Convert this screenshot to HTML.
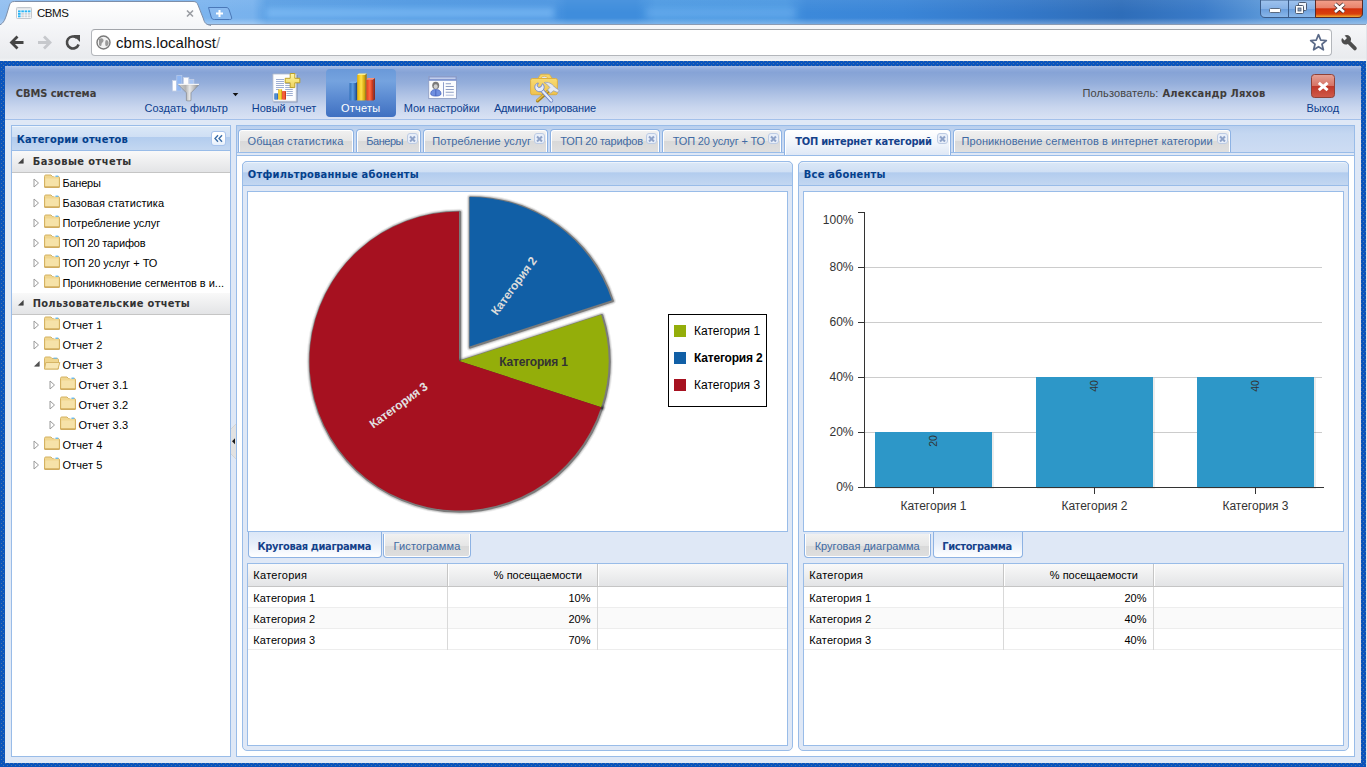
<!DOCTYPE html>
<html lang="ru">
<head>
<meta charset="utf-8">
<title>CBMS</title>
<style>
*{box-sizing:border-box;margin:0;padding:0}
html,body{width:1367px;height:767px;overflow:hidden;background:#dfe8f6}
body{position:relative;font-family:"Liberation Sans",sans-serif;font-size:11px;color:#000}
.abs{position:absolute}
.t{position:absolute;white-space:nowrap;line-height:14px}
.b{font-family:"DejaVu Sans Condensed","Liberation Sans",sans-serif;font-weight:bold}
/* ---------- browser chrome ---------- */
#title{left:0;top:0;width:1367px;height:25px;background:linear-gradient(90deg,#92bff0 0,#7cb4ee 14.500%,#78b2ed 18.500%,#5a9fe4 19.500%,#4f98e1 30%,#4a94e0 40.500%,#3f8ddc 41.500%,#3f8ddc 46.500%,#4c99e2 48%,#4a97e1 57.500%,#3c89da 59%,#3a85d7 66%,#3479ca 74%,#2e6db9 82%,#3a7bc8 88%,#5a97d8 92.500%,#6aa4e0 100%)}
#title:after{content:"";position:absolute;left:0;right:0;top:0;height:25px;background:linear-gradient(180deg,rgba(255,255,255,.06),rgba(255,255,255,0) 50%,rgba(255,255,255,0) 72%,rgba(255,255,255,.32))}
#bar{left:0;top:24px;width:1367px;height:37px;background:linear-gradient(180deg,#f6f7f9,#eff0f3 50%,#e9ebee 92%,#f4f5f6 100%)}
#omni{left:91px;top:29px;width:1241px;height:27px;background:#fff;border:1px solid #b3b6bb;border-top-color:#a2a5aa;border-radius:4px}
#url{left:116px;top:33px;font-size:15px;line-height:18px;color:#111;letter-spacing:.55px}
/* ---------- app ---------- */
#app{left:0;top:61px;width:1367px;height:706px;background-color:#0a54bc;background-image:radial-gradient(circle at 1.500px 2.500px,rgba(150,150,140,.5) .5px,rgba(150,150,140,0) .8px),radial-gradient(circle at 3.500px .5px,rgba(150,150,140,.5) .5px,rgba(150,150,140,0) .8px);background-size:4px 4px}
#inner{left:5px;top:66px;width:1356px;height:697px;background:#dfe8f6}
#hdr{left:5px;top:66px;width:1356px;height:54px;border-bottom:1px solid #a3c0ea;background:linear-gradient(180deg,#a8bee7 0,#90abdb 6%,#86a3d6 12%,#94aedb 32%,#b0c3e5 55%,#c9d6ee 78%,#d9e2f4 100%)}
.tbt{color:#0d3e8e}
#sel{left:326px;top:69px;width:70px;height:48px;border-radius:4px;background:linear-gradient(180deg,#6a99d9 0,#75a3df 25%,#5b8bd2 60%,#3f70c1 100%)}
/* panels */
.ph{position:absolute;border:1px solid #99bce8;background:linear-gradient(180deg,#dbe8f7 0,#cfdff4 45%,#b2ccee 46%,#c3d7f1 100%);box-shadow:inset 0 1px 0 #eef4fc}
.pt{color:#04408c;font-weight:bold}
.ghd{position:absolute;background:linear-gradient(180deg,#f9f9f9,#e3e4e6);border-bottom:1px solid #c5c5c5}
.tab{position:absolute;height:23px;border:1px solid #8db2e3;border-bottom:none;border-radius:4px 4px 0 0;background:linear-gradient(180deg,#f1f1f1 0,#e6e6e6 50%,#d9d9d9 51%,#dfdfdf 100%);box-shadow:inset 0 1px 0 #fff,inset 1px 0 0 #fff,inset -1px 0 0 #fff}
.tab.on{background:linear-gradient(180deg,#fff 0,#eef3fa 60%,#dfe8f6 100%)}
.tab .t{top:5px;color:#416aa3}
.tab.on .t{color:#15428b;font-weight:bold;font-family:"DejaVu Sans Condensed","Liberation Sans",sans-serif}
.cl{position:absolute;top:3px;right:2px;width:11px;height:11px;border:1px solid #bccbe4;border-radius:3px;background:#e9eff9}
.cl:before,.cl:after{content:"";position:absolute;left:1px;top:3.500px;width:7px;height:2px;background:#8fa3c8;transform:rotate(45deg)}
.cl:after{transform:rotate(-45deg)}
.row{position:absolute;left:0;width:218px;height:20px}
.fold{position:absolute;width:16px;height:13px}
.exp{position:absolute;width:0;height:0}
.cell{position:absolute;border-bottom:1px solid #ededed;height:21px}
</style>
</head>
<body>
<div id="title" class="abs"></div>
<div class="abs" style="left:266px;top:8px;width:288px;height:10px;background:rgba(150,205,255,.5);filter:blur(3px)"></div>
<div class="abs" style="left:646px;top:8px;width:150px;height:10px;background:rgba(150,205,255,.28);filter:blur(3px)"></div>
<div id="bar" class="abs"></div>
<svg class="abs" style="left:0;top:0" width="1367" height="62" viewBox="0 0 1367 62">
<defs>
<linearGradient id="tg" x1="0" y1="0" x2="0" y2="1"><stop offset="0" stop-color="#ffffff"/><stop offset="1" stop-color="#f5f6f8"/></linearGradient>
<linearGradient id="cg" x1="0" y1="0" x2="0" y2="1"><stop offset="0" stop-color="#f3a08c"/><stop offset=".45" stop-color="#e8836c"/><stop offset=".5" stop-color="#d2300e"/><stop offset=".8" stop-color="#d8400c"/><stop offset="1" stop-color="#f6c23a"/></linearGradient>
<linearGradient id="wg" x1="0" y1="0" x2="0" y2="1"><stop offset="0" stop-color="#9fc3ee"/><stop offset=".5" stop-color="#86b1e6"/><stop offset=".52" stop-color="#6b9edc"/><stop offset="1" stop-color="#8bb8ea"/></linearGradient>
</defs>
<!-- active tab -->
<path d="M0 24.500 H1367" stroke="#8b9bb3" stroke-width="1"/>
<path d="M-2 26 C3 24 4.500 21 6.500 15 L9.500 5 C10.500 2.500 11.500 1.500 14.500 1.500 L193 1.500 C196 1.500 197 2.500 198 5 L203.500 19 C204.500 23 206 24.500 211 26 Z" fill="url(#tg)"/>
<path d="M-2 25.500 C3 24 4.500 21 6.500 15 L9.500 5 C10.500 2.500 11.500 1.500 14.500 1.500 L193 1.500 C196 1.500 197 2.500 198 5 L203.500 19 C204.500 23 206 24.500 211 25.500" fill="none" stroke="#7d8ea8" stroke-width="1"/>
<!-- favicon -->
<rect x="16.500" y="7.500" width="15" height="11" rx=".8" fill="#fbfcfd" stroke="#c3c8ce"/>
<rect x="17" y="8" width="14" height="1.600" fill="#e2e5e8"/>
<rect x="18" y="10.4" width="2.600" height="1.900" fill="#2ab4f4"/><rect x="21.3" y="10.4" width="2.600" height="1.900" fill="#2ab4f4"/><rect x="24.6" y="10.4" width="2.600" height="1.900" fill="#2ab4f4"/><rect x="27.9" y="10.4" width="2.600" height="1.900" fill="#2ab4f4"/><rect x="18" y="12.9" width="2.600" height="1.900" fill="#2ab4f4"/><rect x="21.3" y="12.9" width="2.600" height="1.900" fill="#cdd3da"/><rect x="24.6" y="12.9" width="2.600" height="1.900" fill="#cdd3da"/><rect x="27.9" y="12.9" width="2.600" height="1.900" fill="#cdd3da"/><rect x="18" y="15.4" width="2.600" height="1.900" fill="#2ab4f4"/><rect x="21.3" y="15.4" width="2.600" height="1.900" fill="#cdd3da"/><rect x="24.6" y="15.4" width="2.600" height="1.900" fill="#cdd3da"/><rect x="27.9" y="15.4" width="2.600" height="1.900" fill="#cdd3da"/>
<!-- tab close -->
<path d="M187 10.5 L193 16.5 M193 10.5 L187 16.5" stroke="#9a9da3" stroke-width="1.6" fill="none"/>
<!-- new tab -->
<path d="M208.5 7.5 L226 7.5 C228 7.5 228.6 8.3 229.2 10 L231.5 17 C232 19 231.5 19.5 229.5 19.5 L214.5 19.5 C212.5 19.5 211.8 18.8 211.2 17 Z" fill="#8dbcf0" fill-opacity=".75" stroke="#4a78b8" stroke-width="1"/>
<path d="M219.5 10 V17 M216 13.5 H223" stroke="#fff" stroke-width="2"/>
<!-- window controls -->
<path d="M1260.5 0 V13 C1260.5 16 1262 17.5 1265 17.5 H1358 C1361 17.5 1362.5 16 1362.5 13 V0 Z" fill="url(#wg)" stroke="#3b5c8a" stroke-width="1"/>
<path d="M1315.5 0 V17.5 H1358 C1361 17.5 1362.5 16 1362.5 13 V0 Z" fill="url(#cg)" stroke="#5a2a26" stroke-width="1"/>
<path d="M1288.5 0 V17" stroke="#3b5c8a" stroke-width="1"/>
<rect x="1269.5" y="8.5" width="11" height="4" rx="1" fill="#fff" stroke="#5a6a80"/>
<rect x="1298.5" y="2.5" width="8" height="8" rx="1" fill="#eef3fa" stroke="#4c5a70"/>
<rect x="1295.500" y="5.5" width="8" height="8" rx="1" fill="#fff" stroke="#4c5a70"/>
<rect x="1298" y="8" width="3" height="3" fill="#8aa0c0" stroke="#4c5a70" stroke-width=".8"/>
<path d="M1335 4 L1344 12 M1344 4 L1335 12" stroke="#4a3030" stroke-width="4.2"/>
<path d="M1335 4 L1344 12 M1344 4 L1335 12" stroke="#fff" stroke-width="2.6"/>
<!-- nav buttons -->
<path d="M23.500 42.500 H12 M17.500 36.500 L11.500 42.500 L17.500 48.500" fill="none" stroke="#454545" stroke-width="2.800"/>
<path d="M38 42.500 H49.500 M44 36.500 L50 42.500 L44 48.500" fill="none" stroke="#c6c8cc" stroke-width="2.800"/>
<path d="M77 38 A6 6 0 1 0 78.600 44.500" fill="none" stroke="#4a4a4a" stroke-width="2.600"/>
<path d="M73 35 H80 V42 Z" fill="#4a4a4a"/>
</svg>
<div id="omni" class="abs"></div>
<svg class="abs" style="left:95px;top:34px" width="18" height="18" viewBox="0 0 18 18"><circle cx="8.500" cy="8.500" r="6.500" fill="#f2f2f2" stroke="#7a7a7a" stroke-width="1.400"/><path d="M4 5 C6 3.500 8 4 8.500 6 C9 8 6.500 8.500 6.500 10.500 C6.500 12.500 5 12.500 4 11 Z M11 6 C13 6 14 8 13.500 10 C13 12 11 13 10.500 11.500 C10 10 10 7 11 6 Z" fill="#9a9a9a"/></svg>
<div class="t " style="left:116px;top:34px;font-size:15px;line-height:18px;color:#111;letter-spacing:.05px">cbms.localhost<span style="color:#8a8a8a">/</span></div>
<svg class="abs" style="left:1308px;top:31px" width="56" height="24" viewBox="0 0 56 24">
<g transform="translate(10.500 11.800) scale(.92) translate(-10.500 -11.300)"><path d="M10.500 2.500 L12.900 8.300 L19 8.800 L14.300 12.800 L15.800 18.900 L10.500 15.600 L5.200 18.900 L6.700 12.800 L2 8.800 L8.100 8.300 Z" fill="#fff" stroke="#5b6a88" stroke-width="1.900" stroke-linejoin="round"/></g>
<g transform="translate(40.800 11.300) rotate(-45) scale(.86)"><path d="M-2 -9 V-5 H2 V-9 A5 5 0 0 1 2.200 0.600 V10 A2.200 2.200 0 0 1 -2.200 10 V0.600 A5 5 0 0 1 -2 -9 Z" fill="#4d4d4d"/></g>
</svg>
<div class="t " style="left:37px;top:6px;font-size:11.5px;line-height:14.5px;letter-spacing:-0.456px;color:#111">CBMS</div>
<div id="app" class="abs"></div>
<div id="inner" class="abs"></div>
<div id="hdr" class="abs"></div>
<div class="abs" style="left:1366px;top:24px;width:1px;height:743px;background:#e2e5ea"></div>
<div class="t b" style="left:15.7px;top:87px;letter-spacing:-0.042px;color:#403c3a">CBMS система</div>
<div id="sel" class="abs"></div>
<div class="t tbt" style="left:144.5px;top:101px;letter-spacing:0.072px;">Создать фильтр</div>
<div class="t tbt" style="left:251.7px;top:101px;letter-spacing:0.023px;">Новый отчет</div>
<div class="t tbt" style="left:341px;top:101px;letter-spacing:0.213px;color:#fff">Отчеты</div>
<div class="t tbt" style="left:403.7px;top:101px;letter-spacing:-0.067px;">Мои настройки</div>
<div class="t tbt" style="left:493.9px;top:101px;letter-spacing:-0.170px;">Администрирование</div>
<div class="t " style="left:1082.5px;top:86px;letter-spacing:0.120px;color:#444">Пользователь:</div>
<div class="t b" style="left:1162.5px;top:87px;letter-spacing:0.183px;color:#403c3a">Александр Ляхов</div>
<div class="t tbt" style="left:1306.5px;top:101px;letter-spacing:-0.083px;">Выход</div>
<svg class="abs" style="left:140px;top:66px" width="480" height="54" viewBox="140 66 480 54">
<defs>
<linearGradient id="fn" x1="0" y1="0" x2="1" y2="0"><stop offset="0" stop-color="#d2d2d2"/><stop offset=".35" stop-color="#b4b4b4"/><stop offset=".55" stop-color="#e8e8e8"/><stop offset="1" stop-color="#8e8e8e"/></linearGradient>
<linearGradient id="bb" x1="0" y1="0" x2="1" y2="0"><stop offset="0" stop-color="#2f6fb8"/><stop offset=".5" stop-color="#5b9be0"/><stop offset="1" stop-color="#2a5fa5"/></linearGradient>
<linearGradient id="by" x1="0" y1="0" x2="1" y2="0"><stop offset="0" stop-color="#e8b100"/><stop offset=".5" stop-color="#ffe14a"/><stop offset="1" stop-color="#c99700"/></linearGradient>
<linearGradient id="br" x1="0" y1="0" x2="1" y2="0"><stop offset="0" stop-color="#e2401c"/><stop offset=".5" stop-color="#ff6a45"/><stop offset="1" stop-color="#b8260c"/></linearGradient>
<linearGradient id="gold2" x1="0" y1="0" x2="0" y2="1"><stop offset="0" stop-color="#f8da72"/><stop offset="1" stop-color="#efc24c"/></linearGradient>
<linearGradient id="gold" x1="0" y1="0" x2="0" y2="1"><stop offset="0" stop-color="#fff6a6"/><stop offset=".5" stop-color="#f6e57c"/><stop offset="1" stop-color="#ecd060"/></linearGradient>
</defs>
<!-- funnel -->
<rect x="172.500" y="80.500" width="4" height="10.500" fill="#fdfdff" stroke="#c3cfe6" stroke-width=".8"/>
<rect x="176.800" y="75.500" width="5" height="15.500" fill="#8fb6f2" stroke="#b4c8ea" stroke-width=".8"/>
<rect x="183.400" y="77.500" width="5.400" height="7" fill="#fdfdff" stroke="#c3cfe6" stroke-width=".8"/>
<rect x="189.200" y="79.500" width="4.600" height="5" fill="#a9c6f4" stroke="#c3cfe6" stroke-width=".8"/>
<path d="M178.300 84.600 H199 L191 92.800 V100.500 C190 101 187.500 101 186.400 100.500 V92.800 Z" fill="url(#fn)" stroke="#85898f" stroke-width=".7"/>
<path d="M178.300 84.400 H199" stroke="#f4f4f4" stroke-width="1.200"/>
<path d="M232.700 93 H238.300 L235.500 96.200 Z" fill="#111"/>
<!-- new report -->
<path d="M273.500 102 H297 V75" fill="none" stroke="#5f6f8f" stroke-opacity=".55" stroke-width="1.200"/>
<path d="M272.900 74 H296.300 V101.300 H272.900 Z" fill="#fcfdff" stroke="#aeb7c8" stroke-width=".8"/>
<g stroke="#9fafd2" stroke-width="1"><path d="M276 79.500 H284 M276 81.500 H284 M276 83.500 H284 M276 85.500 H284 M276 87.500 H284 M276 89.500 H279 M285.200 83.500 H290 M285.200 85.500 H290 M285.200 87.500 H292.800 M285.200 89.500 H292.800 M286.500 91.500 H292.800 M286.500 93.500 H292.800 M286.500 95.500 H292.800"/></g>
<rect x="274.300" y="93.200" width="3.700" height="6.500" rx=".6" fill="url(#bb)"/><rect x="278.200" y="89.200" width="3.900" height="10.500" rx=".6" fill="url(#by)"/><rect x="282.100" y="91" width="3.900" height="8.700" rx=".6" fill="url(#br)"/>
<path d="M290.200 73.500 H294.800 V78.300 H299.800 V82.800 H294.800 V87.600 H290.200 V82.800 H285.200 V78.300 H290.200 Z" fill="url(#gold)" stroke="#b89a1a" stroke-width=".9" stroke-linejoin="round"/>
<!-- reports (selected) -->
<rect x="349.500" y="83" width="6.500" height="17.500" fill="url(#bb)"/><path d="M349.500 83 L351 81.500 H357.500 L356 83 Z" fill="#7db2ec"/><path d="M356 83 L357.500 81.500 V99.500 L356 100.500 Z" fill="#244f8c"/>
<rect x="357.200" y="75" width="8" height="25.500" fill="url(#by)"/><path d="M357.200 75 L358.700 73.500 H366.700 L365.200 75 Z" fill="#fff08a"/><path d="M365.200 75 L366.700 73.500 V99.500 L365.200 100.500 Z" fill="#a87e00"/>
<rect x="366.400" y="79.500" width="7" height="21" fill="url(#br)"/><path d="M366.400 79.500 L367.900 78 H374.900 L373.400 79.500 Z" fill="#ff8f70"/><path d="M373.400 79.500 L374.900 78 V99.500 L373.400 100.500 Z" fill="#96200a"/>
<!-- my settings -->
<rect x="428.700" y="76.600" width="27.800" height="22" fill="#fbfcfe" stroke="#8e9dc2" stroke-width=".9"/>
<rect x="428.700" y="76.600" width="27.800" height="4.200" fill="#7e94ce"/>
<rect x="429.600" y="77.400" width="26" height="1.700" fill="#c2cdea"/>
<ellipse cx="435.700" cy="85.600" rx="3.500" ry="3.800" fill="#7b7b7b"/><ellipse cx="435.700" cy="86.600" rx="2" ry="2.400" fill="#cfcfcf"/>
<path d="M430.700 94 C430.700 90.500 433 89.500 435.800 89.500 C438.600 89.500 441 90.500 441 94 C441 96.800 430.700 96.800 430.700 94 Z" fill="#6f8fe0" stroke="#3f5cb8" stroke-width=".7"/>
<path d="M435.800 90 V96" stroke="#3f5cb8" stroke-width=".8"/>
<path d="M443.500 82.200 V96.500" stroke="#8f9fcc" stroke-width="1"/>
<g stroke="#8f9ec4" stroke-width="1.100"><path d="M445.700 83.700 H451 M445.700 86.500 H453.800 M445.700 89.500 H453.800 M445.700 92.300 H453.800"/><path d="M445.700 95.200 H453.800" stroke="#b5c0de"/></g>
<!-- admin -->
<path d="M537.500 79 L540 75.200 C540.400 74.500 541 74.200 542 74.200 H548 C549 74.200 549.600 74.500 550 75.200 L552.500 79 Z" fill="#f6d468" stroke="#dcae3c" stroke-width=".8"/>
<ellipse cx="544.400" cy="77.600" rx="2.800" ry="1.300" fill="#dfe6f2" stroke="#dcae3c" stroke-width=".7"/>
<rect x="530.600" y="78.500" width="26.800" height="16.200" rx="1.800" fill="url(#gold2)" stroke="#dcae3c" stroke-width=".9"/>
<path d="M547.600 91.800 L537.600 100.800" stroke="#a8821c" stroke-width="3.400" stroke-linecap="round"/><path d="M547.400 91.400 L537.200 100.400" stroke="#e2bc4a" stroke-width="1.600" stroke-linecap="round"/>
<path d="M544.200 82.600 C548 81.600 552 83.500 554.500 87 L558.800 90 C559.600 91 558.500 92.600 557 92.200 L553.500 90.800 L550.500 93.200 L547.500 90 L549.800 87.500 C548.500 85.500 546.500 84 544.200 82.600 Z" fill="#e4e9f4" stroke="#8a96b8" stroke-width=".7"/>
<path d="M540.500 88.800 L551.300 100.600" stroke="#6f86c8" stroke-width="3.800" stroke-linecap="round"/><path d="M540.500 88.800 L551.300 100.600" stroke="#e6ecfa" stroke-width="2.200" stroke-linecap="round"/>
<path d="M535.200 85.200 C534.200 88 535.500 90.800 538.500 91.600 C540.800 92.200 543 91 543.800 89 C544.600 87 544 85 542.600 83.600 L541 86.800 L538.600 87.600 L537.200 85.800 L538.300 83 C537 83.200 535.800 84 535.200 85.200 Z" fill="#e6ecfa" stroke="#6f86c8" stroke-width=".9"/>
</svg>
<svg class="abs" style="left:1308px;top:70px" width="32" height="32" viewBox="1308 70 32 32">
<defs><linearGradient id="ex" x1="0" y1="0" x2="0" y2="1"><stop offset="0" stop-color="#e5a296"/><stop offset=".48" stop-color="#d67466"/><stop offset=".52" stop-color="#c0382a"/><stop offset="1" stop-color="#d05a4a"/></linearGradient></defs>
<rect x="1311.500" y="74.500" width="23" height="23" rx="3" fill="url(#ex)" stroke="#8f4238"/>
<path d="M1318.800 82.800 L1327.600 90.200 M1327.600 82.800 L1318.800 90.200" stroke="#fff" stroke-width="3"/>
</svg>
<div class="abs" style="left:11px;top:125px;width:220px;height:632px;border:1px solid #99bce8;background:#fff"></div>
<div class="ph" style="left:11px;top:125px;width:220px;height:26px"></div>
<div class="t b pt" style="left:16.7px;top:133px;letter-spacing:0.169px;">Категории отчетов</div>
<div class="abs" style="left:211px;top:131px;width:15px;height:15px;border:1px solid #a9c4ec;border-radius:3px;background:linear-gradient(180deg,#fff 50%,#e4eefb)"></div>
<svg class="abs" style="left:211px;top:131px" width="15" height="15" viewBox="0 0 15 15"><path d="M7 4.200 L4 7.500 L7 10.800 M11 4.200 L8 7.500 L11 10.800" fill="none" stroke="#3b6ea8" stroke-width="1.400"/></svg>
<div class="ghd" style="left:12px;top:151px;width:218px;height:22px"></div>
<svg class="abs" style="left:17px;top:157px" width="8" height="8" viewBox="0 0 8 8"><path d="M6.300 1.500 V6.300 H1.500 Z" fill="#444" stroke="#333" stroke-width=".5"/></svg>
<div class="t b" style="left:32.7px;top:155px;letter-spacing:0.438px;color:#333">Базовые отчеты</div>
<svg class="abs" style="left:33px;top:178px" width="7" height="10" viewBox="0 0 7 10"><path d="M1 1 L5.500 5 L1 9 Z" fill="#fff" stroke="#9a9a9a" stroke-width="1"/></svg>
<svg class="abs" style="left:43px;top:174px" width="18" height="14" viewBox="0 0 18 14"><path d="M1.500 13 V2.500 C1.500 1.500 2 1 3 1 H8 L9.500 2.500 H15 C16 2.500 16.500 3 16.500 4 V13 Z" fill="#f0d690" stroke="#d4b262" stroke-width="1"/><path d="M2.500 4.500 H15.500 V12.300 H2.500 Z" fill="#f6e2a8"/><path d="M10.500 2 H15" stroke="#fff" stroke-width="1.400"/><path d="M12.500 2.200 H15.300" stroke="#4fb0ee" stroke-width="1.200"/><path d="M1.500 13.200 H16.500" stroke="#c9a04c" stroke-width="1.200"/></svg>
<div class="t " style="left:62.4px;top:176px;letter-spacing:-0.209px;">Банеры</div>
<svg class="abs" style="left:33px;top:198px" width="7" height="10" viewBox="0 0 7 10"><path d="M1 1 L5.500 5 L1 9 Z" fill="#fff" stroke="#9a9a9a" stroke-width="1"/></svg>
<svg class="abs" style="left:43px;top:194px" width="18" height="14" viewBox="0 0 18 14"><path d="M1.500 13 V2.500 C1.500 1.500 2 1 3 1 H8 L9.500 2.500 H15 C16 2.500 16.500 3 16.500 4 V13 Z" fill="#f0d690" stroke="#d4b262" stroke-width="1"/><path d="M2.500 4.500 H15.500 V12.300 H2.500 Z" fill="#f6e2a8"/><path d="M10.500 2 H15" stroke="#fff" stroke-width="1.400"/><path d="M12.500 2.200 H15.300" stroke="#4fb0ee" stroke-width="1.200"/><path d="M1.500 13.200 H16.500" stroke="#c9a04c" stroke-width="1.200"/></svg>
<div class="t " style="left:62.4px;top:196px;letter-spacing:0.071px;">Базовая статистика</div>
<svg class="abs" style="left:33px;top:218px" width="7" height="10" viewBox="0 0 7 10"><path d="M1 1 L5.500 5 L1 9 Z" fill="#fff" stroke="#9a9a9a" stroke-width="1"/></svg>
<svg class="abs" style="left:43px;top:214px" width="18" height="14" viewBox="0 0 18 14"><path d="M1.500 13 V2.500 C1.500 1.500 2 1 3 1 H8 L9.500 2.500 H15 C16 2.500 16.500 3 16.500 4 V13 Z" fill="#f0d690" stroke="#d4b262" stroke-width="1"/><path d="M2.500 4.500 H15.500 V12.300 H2.500 Z" fill="#f6e2a8"/><path d="M10.500 2 H15" stroke="#fff" stroke-width="1.400"/><path d="M12.500 2.200 H15.300" stroke="#4fb0ee" stroke-width="1.200"/><path d="M1.500 13.200 H16.500" stroke="#c9a04c" stroke-width="1.200"/></svg>
<div class="t " style="left:62.4px;top:216px;letter-spacing:0.031px;">Потребление услуг</div>
<svg class="abs" style="left:33px;top:238px" width="7" height="10" viewBox="0 0 7 10"><path d="M1 1 L5.500 5 L1 9 Z" fill="#fff" stroke="#9a9a9a" stroke-width="1"/></svg>
<svg class="abs" style="left:43px;top:234px" width="18" height="14" viewBox="0 0 18 14"><path d="M1.500 13 V2.500 C1.500 1.500 2 1 3 1 H8 L9.500 2.500 H15 C16 2.500 16.500 3 16.500 4 V13 Z" fill="#f0d690" stroke="#d4b262" stroke-width="1"/><path d="M2.500 4.500 H15.500 V12.300 H2.500 Z" fill="#f6e2a8"/><path d="M10.500 2 H15" stroke="#fff" stroke-width="1.400"/><path d="M12.500 2.200 H15.300" stroke="#4fb0ee" stroke-width="1.200"/><path d="M1.500 13.200 H16.500" stroke="#c9a04c" stroke-width="1.200"/></svg>
<div class="t " style="left:62.4px;top:236px;letter-spacing:-0.160px;">ТОП 20 тарифов</div>
<svg class="abs" style="left:33px;top:258px" width="7" height="10" viewBox="0 0 7 10"><path d="M1 1 L5.500 5 L1 9 Z" fill="#fff" stroke="#9a9a9a" stroke-width="1"/></svg>
<svg class="abs" style="left:43px;top:254px" width="18" height="14" viewBox="0 0 18 14"><path d="M1.500 13 V2.500 C1.500 1.500 2 1 3 1 H8 L9.500 2.500 H15 C16 2.500 16.500 3 16.500 4 V13 Z" fill="#f0d690" stroke="#d4b262" stroke-width="1"/><path d="M2.500 4.500 H15.500 V12.300 H2.500 Z" fill="#f6e2a8"/><path d="M10.500 2 H15" stroke="#fff" stroke-width="1.400"/><path d="M12.500 2.200 H15.300" stroke="#4fb0ee" stroke-width="1.200"/><path d="M1.500 13.200 H16.500" stroke="#c9a04c" stroke-width="1.200"/></svg>
<div class="t " style="left:62.4px;top:256px;letter-spacing:-0.009px;">ТОП 20 услуг + ТО</div>
<svg class="abs" style="left:33px;top:278px" width="7" height="10" viewBox="0 0 7 10"><path d="M1 1 L5.500 5 L1 9 Z" fill="#fff" stroke="#9a9a9a" stroke-width="1"/></svg>
<svg class="abs" style="left:43px;top:274px" width="18" height="14" viewBox="0 0 18 14"><path d="M1.500 13 V2.500 C1.500 1.500 2 1 3 1 H8 L9.500 2.500 H15 C16 2.500 16.500 3 16.500 4 V13 Z" fill="#f0d690" stroke="#d4b262" stroke-width="1"/><path d="M2.500 4.500 H15.500 V12.300 H2.500 Z" fill="#f6e2a8"/><path d="M10.500 2 H15" stroke="#fff" stroke-width="1.400"/><path d="M12.500 2.200 H15.300" stroke="#4fb0ee" stroke-width="1.200"/><path d="M1.500 13.200 H16.500" stroke="#c9a04c" stroke-width="1.200"/></svg>
<div class="t " style="left:62.4px;top:276px;letter-spacing:-0.018px;">Проникновение сегментов в и...</div>
<div class="ghd" style="left:12px;top:293px;width:218px;height:22px"></div>
<svg class="abs" style="left:17px;top:299px" width="8" height="8" viewBox="0 0 8 8"><path d="M6.300 1.500 V6.300 H1.500 Z" fill="#444" stroke="#333" stroke-width=".5"/></svg>
<div class="t b" style="left:32.7px;top:297px;letter-spacing:0.302px;color:#333">Пользовательские отчеты</div>
<svg class="abs" style="left:33px;top:320px" width="7" height="10" viewBox="0 0 7 10"><path d="M1 1 L5.500 5 L1 9 Z" fill="#fff" stroke="#9a9a9a" stroke-width="1"/></svg>
<svg class="abs" style="left:43px;top:316px" width="18" height="14" viewBox="0 0 18 14"><path d="M1.500 13 V2.500 C1.500 1.500 2 1 3 1 H8 L9.500 2.500 H15 C16 2.500 16.500 3 16.500 4 V13 Z" fill="#f0d690" stroke="#d4b262" stroke-width="1"/><path d="M2.500 4.500 H15.500 V12.300 H2.500 Z" fill="#f6e2a8"/><path d="M10.500 2 H15" stroke="#fff" stroke-width="1.400"/><path d="M12.500 2.200 H15.300" stroke="#4fb0ee" stroke-width="1.200"/><path d="M1.500 13.200 H16.500" stroke="#c9a04c" stroke-width="1.200"/></svg>
<div class="t " style="left:62.4px;top:318px;letter-spacing:0.102px;">Отчет 1</div>
<svg class="abs" style="left:33px;top:340px" width="7" height="10" viewBox="0 0 7 10"><path d="M1 1 L5.500 5 L1 9 Z" fill="#fff" stroke="#9a9a9a" stroke-width="1"/></svg>
<svg class="abs" style="left:43px;top:336px" width="18" height="14" viewBox="0 0 18 14"><path d="M1.500 13 V2.500 C1.500 1.500 2 1 3 1 H8 L9.500 2.500 H15 C16 2.500 16.500 3 16.500 4 V13 Z" fill="#f0d690" stroke="#d4b262" stroke-width="1"/><path d="M2.500 4.500 H15.500 V12.300 H2.500 Z" fill="#f6e2a8"/><path d="M10.500 2 H15" stroke="#fff" stroke-width="1.400"/><path d="M12.500 2.200 H15.300" stroke="#4fb0ee" stroke-width="1.200"/><path d="M1.500 13.200 H16.500" stroke="#c9a04c" stroke-width="1.200"/></svg>
<div class="t " style="left:62.4px;top:338px;letter-spacing:0.102px;">Отчет 2</div>
<svg class="abs" style="left:33px;top:360px" width="8" height="8" viewBox="0 0 8 8"><path d="M6.300 1.500 V6.300 H1.500 Z" fill="#555" stroke="#333" stroke-width=".5"/></svg>
<svg class="abs" style="left:43px;top:356px" width="18" height="14" viewBox="0 0 18 14"><path d="M1.500 13 V2.500 C1.500 1.500 2 1 3 1 H7.500 L9 2.500 H14 C15 2.500 15.500 3 15.500 4 V13 Z" fill="#f0d68e" stroke="#d6b566" stroke-width="1"/><path d="M10.500 2.200 H14.300" stroke="#6fb8e8" stroke-width="1.200"/><path d="M1.500 13 L2.800 6.500 H16.800 L15 13 Z" fill="#f8e7b4" stroke="#d6b566" stroke-width="1"/></svg>
<div class="t " style="left:62.4px;top:358px;letter-spacing:0.102px;">Отчет 3</div>
<svg class="abs" style="left:49px;top:380px" width="7" height="10" viewBox="0 0 7 10"><path d="M1 1 L5.500 5 L1 9 Z" fill="#fff" stroke="#9a9a9a" stroke-width="1"/></svg>
<svg class="abs" style="left:59px;top:376px" width="18" height="14" viewBox="0 0 18 14"><path d="M1.500 13 V2.500 C1.500 1.500 2 1 3 1 H8 L9.500 2.500 H15 C16 2.500 16.500 3 16.500 4 V13 Z" fill="#f0d690" stroke="#d4b262" stroke-width="1"/><path d="M2.500 4.500 H15.500 V12.300 H2.500 Z" fill="#f6e2a8"/><path d="M10.500 2 H15" stroke="#fff" stroke-width="1.400"/><path d="M12.500 2.200 H15.300" stroke="#4fb0ee" stroke-width="1.200"/><path d="M1.500 13.200 H16.500" stroke="#c9a04c" stroke-width="1.200"/></svg>
<div class="t " style="left:78.4px;top:378px;letter-spacing:0.171px;">Отчет 3.1</div>
<svg class="abs" style="left:49px;top:400px" width="7" height="10" viewBox="0 0 7 10"><path d="M1 1 L5.500 5 L1 9 Z" fill="#fff" stroke="#9a9a9a" stroke-width="1"/></svg>
<svg class="abs" style="left:59px;top:396px" width="18" height="14" viewBox="0 0 18 14"><path d="M1.500 13 V2.500 C1.500 1.500 2 1 3 1 H8 L9.500 2.500 H15 C16 2.500 16.500 3 16.500 4 V13 Z" fill="#f0d690" stroke="#d4b262" stroke-width="1"/><path d="M2.500 4.500 H15.500 V12.300 H2.500 Z" fill="#f6e2a8"/><path d="M10.500 2 H15" stroke="#fff" stroke-width="1.400"/><path d="M12.500 2.200 H15.300" stroke="#4fb0ee" stroke-width="1.200"/><path d="M1.500 13.200 H16.500" stroke="#c9a04c" stroke-width="1.200"/></svg>
<div class="t " style="left:78.4px;top:398px;letter-spacing:0.171px;">Отчет 3.2</div>
<svg class="abs" style="left:49px;top:420px" width="7" height="10" viewBox="0 0 7 10"><path d="M1 1 L5.500 5 L1 9 Z" fill="#fff" stroke="#9a9a9a" stroke-width="1"/></svg>
<svg class="abs" style="left:59px;top:416px" width="18" height="14" viewBox="0 0 18 14"><path d="M1.500 13 V2.500 C1.500 1.500 2 1 3 1 H8 L9.500 2.500 H15 C16 2.500 16.500 3 16.500 4 V13 Z" fill="#f0d690" stroke="#d4b262" stroke-width="1"/><path d="M2.500 4.500 H15.500 V12.300 H2.500 Z" fill="#f6e2a8"/><path d="M10.500 2 H15" stroke="#fff" stroke-width="1.400"/><path d="M12.500 2.200 H15.300" stroke="#4fb0ee" stroke-width="1.200"/><path d="M1.500 13.200 H16.500" stroke="#c9a04c" stroke-width="1.200"/></svg>
<div class="t " style="left:78.4px;top:418px;letter-spacing:0.171px;">Отчет 3.3</div>
<svg class="abs" style="left:33px;top:440px" width="7" height="10" viewBox="0 0 7 10"><path d="M1 1 L5.500 5 L1 9 Z" fill="#fff" stroke="#9a9a9a" stroke-width="1"/></svg>
<svg class="abs" style="left:43px;top:436px" width="18" height="14" viewBox="0 0 18 14"><path d="M1.500 13 V2.500 C1.500 1.500 2 1 3 1 H8 L9.500 2.500 H15 C16 2.500 16.500 3 16.500 4 V13 Z" fill="#f0d690" stroke="#d4b262" stroke-width="1"/><path d="M2.500 4.500 H15.500 V12.300 H2.500 Z" fill="#f6e2a8"/><path d="M10.500 2 H15" stroke="#fff" stroke-width="1.400"/><path d="M12.500 2.200 H15.300" stroke="#4fb0ee" stroke-width="1.200"/><path d="M1.500 13.200 H16.500" stroke="#c9a04c" stroke-width="1.200"/></svg>
<div class="t " style="left:62.4px;top:438px;letter-spacing:0.102px;">Отчет 4</div>
<svg class="abs" style="left:33px;top:460px" width="7" height="10" viewBox="0 0 7 10"><path d="M1 1 L5.500 5 L1 9 Z" fill="#fff" stroke="#9a9a9a" stroke-width="1"/></svg>
<svg class="abs" style="left:43px;top:456px" width="18" height="14" viewBox="0 0 18 14"><path d="M1.500 13 V2.500 C1.500 1.500 2 1 3 1 H8 L9.500 2.500 H15 C16 2.500 16.500 3 16.500 4 V13 Z" fill="#f0d690" stroke="#d4b262" stroke-width="1"/><path d="M2.500 4.500 H15.500 V12.300 H2.500 Z" fill="#f6e2a8"/><path d="M10.500 2 H15" stroke="#fff" stroke-width="1.400"/><path d="M12.500 2.200 H15.300" stroke="#4fb0ee" stroke-width="1.200"/><path d="M1.500 13.200 H16.500" stroke="#c9a04c" stroke-width="1.200"/></svg>
<div class="t " style="left:62.4px;top:458px;letter-spacing:0.102px;">Отчет 5</div>
<svg class="abs" style="left:231px;top:422px" width="5" height="40" viewBox="0 0 5 40"><path d="M0 7 L5 2 V37 L0 32 Z" fill="#e2e2e2"/><path d="M0 7 L5 2 M0 32 L5 37" stroke="#cfcfcf" stroke-width=".8" fill="none"/><path d="M4 16.300 L1 19.300 L4 22.300 Z" fill="#1a1a1a"/></svg>
<div class="abs" style="left:236px;top:125px;width:1119px;height:632px;border:1px solid #99bce8;background:#fff"></div>
<div class="abs" style="left:237px;top:126px;width:1117px;height:27px;background:linear-gradient(180deg,#b9cfee,#c4d7f1 30%,#cddcf3);border-bottom:1px solid #99bce8"></div>
<div class="abs" style="left:237px;top:153px;width:1117px;height:3px;background:#dfe8f6;border-bottom:1px solid #99bce8"></div>
<div class="tab" style="left:238px;top:129px;width:116px;height:23px"></div>
<div class="t " style="left:247.5px;top:134px;letter-spacing:0.096px;color:#416aa3">Общая статистика</div>
<div class="tab" style="left:356px;top:129px;width:65px;height:23px"><div class=cl></div></div>
<div class="t " style="left:366.2px;top:134px;letter-spacing:-0.442px;color:#416aa3">Банеры</div>
<div class="tab" style="left:423px;top:129px;width:125px;height:23px"><div class=cl></div></div>
<div class="t " style="left:432.3px;top:134px;letter-spacing:0.078px;color:#416aa3">Потребление услуг</div>
<div class="tab" style="left:550px;top:129px;width:110px;height:23px"><div class=cl></div></div>
<div class="t " style="left:560.3px;top:134px;letter-spacing:-0.203px;color:#416aa3">ТОП 20 тарифов</div>
<div class="tab" style="left:662px;top:129px;width:120px;height:23px"><div class=cl></div></div>
<div class="t " style="left:672.7px;top:134px;letter-spacing:-0.168px;color:#416aa3">ТОП 20 услуг + ТО</div>
<div class="tab on" style="left:784px;top:129px;width:167px;height:26px"><div class=cl></div></div>
<div class="t b" style="left:795.2px;top:135px;letter-spacing:-0.232px;color:#15428b">ТОП интернет категорий</div>
<div class="tab" style="left:953px;top:129px;width:278px;height:23px"><div class=cl></div></div>
<div class="t " style="left:961.4px;top:134px;letter-spacing:0.115px;color:#416aa3">Проникновение сегментов в интернет категории</div>
<div class="abs" style="left:242px;top:161px;width:551px;height:590px;border:1px solid #99bce8;border-radius:5px;background:#dfe8f6"></div>
<div class="ph" style="left:242px;top:161px;width:551px;height:25px;border-radius:5px 5px 0 0"></div>
<div class="t b pt" style="left:247.8px;top:168px;letter-spacing:0.250px;">Отфильтрованные абоненты</div>
<div class="abs" style="left:247px;top:191px;width:541px;height:341px;border:1px solid #99bce8;background:#fff"></div>
<div class="abs" style="left:247px;top:563px;width:541px;height:183px;border:1px solid #99bce8;background:#fff"></div>
<div class="abs" style="left:798px;top:161px;width:551px;height:590px;border:1px solid #99bce8;border-radius:5px;background:#dfe8f6"></div>
<div class="ph" style="left:798px;top:161px;width:551px;height:25px;border-radius:5px 5px 0 0"></div>
<div class="t b pt" style="left:803.8px;top:168px;letter-spacing:0.248px;">Все абоненты</div>
<div class="abs" style="left:803px;top:191px;width:541px;height:341px;border:1px solid #99bce8;background:#fff"></div>
<div class="abs" style="left:803px;top:563px;width:541px;height:183px;border:1px solid #99bce8;background:#fff"></div>
<div class="abs" style="left:248px;top:532px;width:134px;height:26px;border-radius:0 0 4px 4px;border:1px solid #8db2e3;border-top:none;background:linear-gradient(180deg,#dbe7f7,#e6eefa 45%,#fff 100%)"></div>
<div class="t b" style="left:257.6px;top:540px;letter-spacing:-0.346px;color:#15428b">Круговая диаграмма</div>
<div class="tab" style="left:383px;top:534px;width:88px;height:24px;border-radius:0 0 4px 4px;border:1px solid #8db2e3;border-top:none;box-shadow:inset 0 -1px 0 #fff,inset 1px 0 0 #fff,inset -1px 0 0 #fff"></div>
<div class="t " style="left:393.6px;top:539px;letter-spacing:0.118px;color:#416aa3">Гистограмма</div>
<div class="tab" style="left:804px;top:534px;width:127px;height:24px;border-radius:0 0 4px 4px;border:1px solid #8db2e3;border-top:none;box-shadow:inset 0 -1px 0 #fff,inset 1px 0 0 #fff,inset -1px 0 0 #fff"></div>
<div class="t " style="left:814.7px;top:539px;letter-spacing:0.011px;color:#416aa3">Круговая диаграмма</div>
<div class="abs" style="left:933px;top:532px;width:90px;height:26px;border-radius:0 0 4px 4px;border:1px solid #8db2e3;border-top:none;background:linear-gradient(180deg,#dbe7f7,#e6eefa 45%,#fff 100%)"></div>
<div class="t b" style="left:942.3px;top:540px;letter-spacing:-0.366px;color:#15428b">Гистограмма</div>
<div class="ghd" style="left:248px;top:564px;width:539px;height:23px"></div>
<div class="abs" style="left:447px;top:564px;width:1px;height:22px;background:#c5c5c5"></div>
<div class="abs" style="left:448px;top:564px;width:1px;height:22px;background:#fff"></div>
<div class="abs" style="left:597px;top:564px;width:1px;height:22px;background:#c5c5c5"></div>
<div class="abs" style="left:598px;top:564px;width:1px;height:22px;background:#fff"></div>
<div class="t " style="left:253.3px;top:568px;letter-spacing:0.276px;">Категория</div>
<div class="t" style="left:448px;width:134px;text-align:right;top:568.20px">% посещаемости</div>
<div class="abs" style="left:248px;top:587px;width:539px;height:21px;background:#fff;border-bottom:1px solid #ededed"></div>
<div class="abs" style="left:447px;top:587px;width:1px;height:21px;background:#d9d9d9"></div>
<div class="abs" style="left:597px;top:587px;width:1px;height:21px;background:#d9d9d9"></div>
<div class="t " style="left:253.3px;top:591px;letter-spacing:0.128px;">Категория 1</div>
<div class="t" style="left:448px;width:142.500px;text-align:right;top:591.20px">10%</div>
<div class="abs" style="left:248px;top:608px;width:539px;height:21px;background:#fafafa;border-bottom:1px solid #ededed"></div>
<div class="abs" style="left:447px;top:608px;width:1px;height:21px;background:#d9d9d9"></div>
<div class="abs" style="left:597px;top:608px;width:1px;height:21px;background:#d9d9d9"></div>
<div class="t " style="left:253.3px;top:612px;letter-spacing:0.128px;">Категория 2</div>
<div class="t" style="left:448px;width:142.500px;text-align:right;top:612.20px">20%</div>
<div class="abs" style="left:248px;top:629px;width:539px;height:21px;background:#fff;border-bottom:1px solid #ededed"></div>
<div class="abs" style="left:447px;top:629px;width:1px;height:21px;background:#d9d9d9"></div>
<div class="abs" style="left:597px;top:629px;width:1px;height:21px;background:#d9d9d9"></div>
<div class="t " style="left:253.3px;top:633px;letter-spacing:0.128px;">Категория 3</div>
<div class="t" style="left:448px;width:142.500px;text-align:right;top:633.20px">70%</div>
<div class="ghd" style="left:804px;top:564px;width:539px;height:23px"></div>
<div class="abs" style="left:1003px;top:564px;width:1px;height:22px;background:#c5c5c5"></div>
<div class="abs" style="left:1004px;top:564px;width:1px;height:22px;background:#fff"></div>
<div class="abs" style="left:1153px;top:564px;width:1px;height:22px;background:#c5c5c5"></div>
<div class="abs" style="left:1154px;top:564px;width:1px;height:22px;background:#fff"></div>
<div class="t " style="left:809.3px;top:568px;letter-spacing:0.276px;">Категория</div>
<div class="t" style="left:1004px;width:134px;text-align:right;top:568.20px">% посещаемости</div>
<div class="abs" style="left:804px;top:587px;width:539px;height:21px;background:#fff;border-bottom:1px solid #ededed"></div>
<div class="abs" style="left:1003px;top:587px;width:1px;height:21px;background:#d9d9d9"></div>
<div class="abs" style="left:1153px;top:587px;width:1px;height:21px;background:#d9d9d9"></div>
<div class="t " style="left:809.3px;top:591px;letter-spacing:0.128px;">Категория 1</div>
<div class="t" style="left:1004px;width:142.500px;text-align:right;top:591.20px">20%</div>
<div class="abs" style="left:804px;top:608px;width:539px;height:21px;background:#fafafa;border-bottom:1px solid #ededed"></div>
<div class="abs" style="left:1003px;top:608px;width:1px;height:21px;background:#d9d9d9"></div>
<div class="abs" style="left:1153px;top:608px;width:1px;height:21px;background:#d9d9d9"></div>
<div class="t " style="left:809.3px;top:612px;letter-spacing:0.128px;">Категория 2</div>
<div class="t" style="left:1004px;width:142.500px;text-align:right;top:612.20px">40%</div>
<div class="abs" style="left:804px;top:629px;width:539px;height:21px;background:#fff;border-bottom:1px solid #ededed"></div>
<div class="abs" style="left:1003px;top:629px;width:1px;height:21px;background:#d9d9d9"></div>
<div class="abs" style="left:1153px;top:629px;width:1px;height:21px;background:#d9d9d9"></div>
<div class="t " style="left:809.3px;top:633px;letter-spacing:0.128px;">Категория 3</div>
<div class="t" style="left:1004px;width:142.500px;text-align:right;top:633.20px">40%</div>
<svg class="abs" style="left:248px;top:192px" width="539" height="340" viewBox="248 192 539 340">
<g transform="translate(0.7 0.7)" fill="none" stroke="#000" stroke-linejoin="round">
<path d="M459.00 361.00 L601.18 407.20 A149.5 149.5 0 0 0 601.18 314.80 Z" stroke-width="7" stroke-opacity=".07"/><path d="M459.00 361.00 L601.18 407.20 A149.5 149.5 0 0 0 601.18 314.80 Z" stroke-width="5" stroke-opacity=".13"/><path d="M459.00 361.00 L601.18 407.20 A149.5 149.5 0 0 0 601.18 314.80 Z" stroke-width="3" stroke-opacity=".4"/>
<path d="M469.58 346.44 L611.76 300.24 A149.5 149.5 0 0 0 469.58 196.94 Z" stroke-width="7" stroke-opacity=".07"/><path d="M469.58 346.44 L611.76 300.24 A149.5 149.5 0 0 0 469.58 196.94 Z" stroke-width="5" stroke-opacity=".13"/><path d="M469.58 346.44 L611.76 300.24 A149.5 149.5 0 0 0 469.58 196.94 Z" stroke-width="3" stroke-opacity=".4"/>
<path d="M459.00 361.00 L459.00 211.50 A149.5 149.5 0 1 0 601.18 407.20 Z" stroke-width="7" stroke-opacity=".07"/><path d="M459.00 361.00 L459.00 211.50 A149.5 149.5 0 1 0 601.18 407.20 Z" stroke-width="5" stroke-opacity=".13"/><path d="M459.00 361.00 L459.00 211.50 A149.5 149.5 0 1 0 601.18 407.20 Z" stroke-width="3" stroke-opacity=".4"/>
</g>
<path d="M459.00 361.00 L601.18 407.20 A149.5 149.5 0 0 0 601.18 314.80 Z" fill="#94ae0a"/>
<path d="M469.58 346.44 L611.76 300.24 A149.5 149.5 0 0 0 469.58 196.94 Z" fill="#115fa6"/>
<path d="M459.00 361.00 L459.00 211.50 A149.5 149.5 0 1 0 601.18 407.20 Z" fill="#a61120"/>
<g font-family="Liberation Sans, sans-serif" font-size="12" font-weight="bold" text-anchor="middle" letter-spacing="-.19">
<text x="533.500" y="366.300" fill="#333">Категория 1</text>
<text transform="translate(513.7 285.8) rotate(-54)" y="4.300" fill="#dcdcdc">Категория 2</text>
<text transform="translate(398.3 405.1) rotate(-36)" y="4.300" fill="#e2e2e2">Категория 3</text>
</g>
<rect x="668.500" y="314.500" width="98" height="92" fill="#fff" stroke="#000"/>
<rect x="674" y="325" width="12" height="12" fill="#94ae0a"/>
<text x="694" y="335.3" font-family="Liberation Sans, sans-serif" font-size="12"  fill="#000">Категория 1</text>
<rect x="674" y="352" width="12" height="12" fill="#115fa6"/>
<text x="694" y="362.3" font-family="Liberation Sans, sans-serif" font-size="12" font-weight="bold" letter-spacing="-.19" fill="#000">Категория 2</text>
<rect x="674" y="379" width="12" height="12" fill="#a61120"/>
<text x="694" y="389.3" font-family="Liberation Sans, sans-serif" font-size="12"  fill="#000">Категория 3</text>
</svg>
<svg class="abs" style="left:804px;top:192px" width="539" height="340" viewBox="804 192 539 340" font-family="Liberation Sans, sans-serif">
<path d="M865 432.5 H1322" stroke="#ccc" stroke-width="1"/>
<path d="M865 377.5 H1322" stroke="#ccc" stroke-width="1"/>
<path d="M865 322.5 H1322" stroke="#ccc" stroke-width="1"/>
<path d="M865 267.5 H1322" stroke="#ccc" stroke-width="1"/>
<rect x="876" y="433" width="118" height="56" fill="#000" fill-opacity=".07"/>
<rect x="875" y="432" width="117" height="55.5" fill="#2d97c8"/>
<rect x="1037" y="378" width="118" height="111" fill="#000" fill-opacity=".07"/>
<rect x="1036" y="377" width="117" height="110.5" fill="#2d97c8"/>
<rect x="1198" y="378" width="118" height="111" fill="#000" fill-opacity=".07"/>
<rect x="1197" y="377" width="117" height="110.5" fill="#2d97c8"/>
<path d="M864.500 212 V487.500 H1324" fill="none" stroke="#333" stroke-width="1"/>
<path d="M858 487.5 H865" stroke="#333" stroke-width="1"/>
<text x="853.500" y="491.0" font-size="12" text-anchor="end" fill="#333">0%</text>
<path d="M858 432.5 H865" stroke="#333" stroke-width="1"/>
<text x="853.500" y="436.0" font-size="12" text-anchor="end" fill="#333">20%</text>
<path d="M858 377.5 H865" stroke="#333" stroke-width="1"/>
<text x="853.500" y="381.0" font-size="12" text-anchor="end" fill="#333">40%</text>
<path d="M858 322.5 H865" stroke="#333" stroke-width="1"/>
<text x="853.500" y="326.0" font-size="12" text-anchor="end" fill="#333">60%</text>
<path d="M858 267.5 H865" stroke="#333" stroke-width="1"/>
<text x="853.500" y="271.0" font-size="12" text-anchor="end" fill="#333">80%</text>
<path d="M858 212.5 H865" stroke="#333" stroke-width="1"/>
<text x="853.500" y="224.3" font-size="12" text-anchor="end" fill="#333">100%</text>
<path d="M933.5 487.500 V494" stroke="#333" stroke-width="1"/>
<text x="933.5" y="510" font-size="12" text-anchor="middle" fill="#333">Категория 1</text>
<text transform="translate(933.5 441) rotate(-90)" y="3.700" font-size="10.500" text-anchor="middle" fill="#333">20</text>
<path d="M1094.5 487.500 V494" stroke="#333" stroke-width="1"/>
<text x="1094.5" y="510" font-size="12" text-anchor="middle" fill="#333">Категория 2</text>
<text transform="translate(1094.5 386) rotate(-90)" y="3.700" font-size="10.500" text-anchor="middle" fill="#333">40</text>
<path d="M1255.5 487.500 V494" stroke="#333" stroke-width="1"/>
<text x="1255.5" y="510" font-size="12" text-anchor="middle" fill="#333">Категория 3</text>
<text transform="translate(1255.5 386) rotate(-90)" y="3.700" font-size="10.500" text-anchor="middle" fill="#333">40</text>
</svg>
</body>
</html>
